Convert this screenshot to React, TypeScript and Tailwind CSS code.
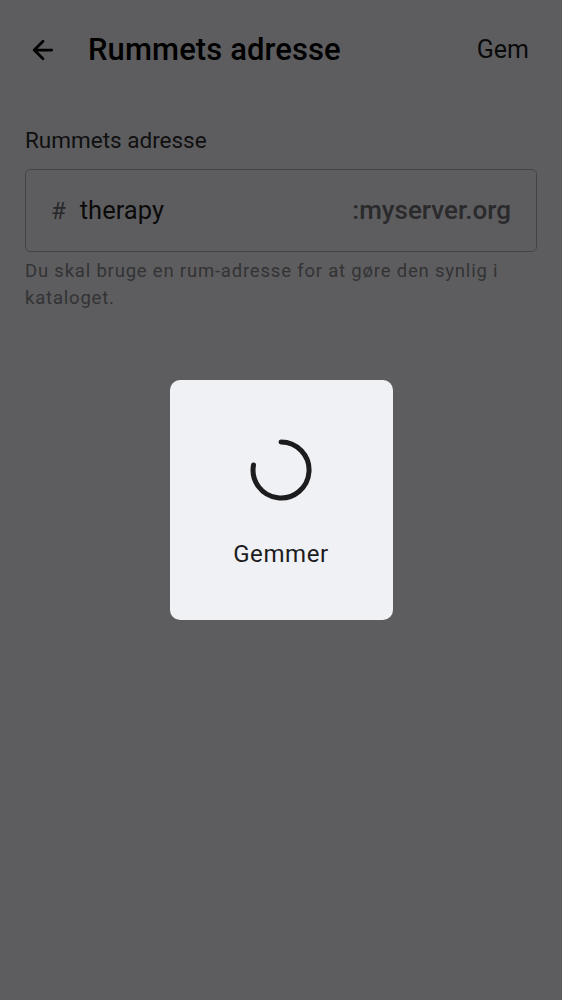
import { ArrowLeft } from 'lucide-react';

export default function App() {
  return (
    <div
      className="relative w-[562px] h-[1000px] bg-[#f5f5fa] overflow-hidden"
      style={{ fontFamily: 'Roboto, "Noto Sans", sans-serif' }}
    >
      {/* App bar */}
      <div className="flex items-center h-[100px] pl-[28px] pr-[33px]">
        <ArrowLeft className="w-[30px] h-[30px] text-black" strokeWidth={2.2} />
        <h1 className="ml-[30px] text-[31px] font-medium text-black tracking-[0.1px]">Rummets adresse</h1>
        <span className="ml-auto text-[25px] text-[#1c1c1e]">Gem</span>
      </div>

      {/* Content */}
      <div className="px-[25px] pt-[25px]">
        <label className="block text-[22.5px] text-[#2c2c2e] leading-[30px]">Rummets adresse</label>
        <div className="mt-[14px] h-[83px] flex items-center border border-[#b4b4b8] rounded-[5px] pl-[25px] pr-[25px]">
          <span className="text-[24px] text-[#6b6b70]">#</span>
          <span className="ml-[14px] text-[25.5px] text-[#1c1c1e]">therapy</span>
          <span className="ml-auto text-[26px] font-medium text-[#707075]">:myserver.org</span>
        </div>
        <p className="mt-[6px] text-[18.5px] leading-[27px] tracking-[0.8px] text-[#86868b] pr-[20px]">
          Du skal bruge en rum-adresse for at gøre den synlig i kataloget.
        </p>
      </div>

      {/* Dim overlay */}
      <div className="absolute inset-0 bg-black/[0.62] flex items-start justify-center pt-[380px]">
        <div className="w-[223px] h-[240px] rounded-[10px] bg-[#f0f1f5] flex flex-col items-center pt-[58px]">
          <svg width="64" height="64" viewBox="0 0 64 64">
            <path
              d="M32 4 A28 28 0 1 1 4.5 27"
              fill="none"
              stroke="#1c1c1e"
              strokeWidth="5"
              strokeLinecap="round"
            />
          </svg>
          <span className="mt-[34px] text-[24px] text-[#1c1c1e] tracking-[0.6px]">Gemmer</span>
        </div>
      </div>
    </div>
  );
}
